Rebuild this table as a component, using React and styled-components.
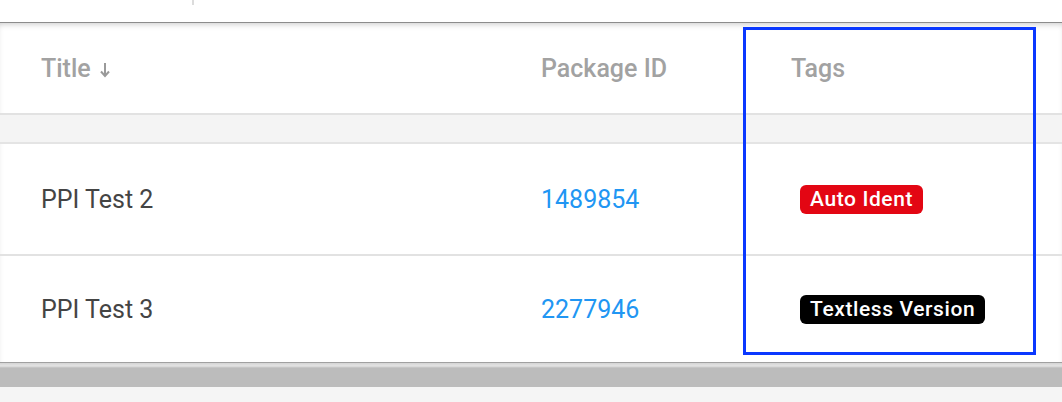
import React from "react";
import styled, { createGlobalStyle } from "styled-components";

const GlobalStyle = createGlobalStyle`
  html, body {
    margin: 0;
    padding: 0;
    background: #f5f5f5;
    font-family: Roboto, "Noto Sans", "Liberation Sans", sans-serif;
  }
`;

const Page = styled.div`
  position: relative;
  width: 1062px;
  height: 402px;
  overflow: hidden;
  display: flex;
  flex-direction: column;
  background: #f5f5f5;
`;

const TopBar = styled.div`
  height: 22px;
  background: #ffffff;
  display: flex;
  padding-left: 192px;
  border-bottom: 1px solid #8c8c8c;
`;

const TopDivider = styled.div`
  width: 2px;
  height: 5px;
  background: #dcdcdc;
`;

const Table = styled.div`
  display: flex;
  flex-direction: column;
  background: #ffffff;
  box-shadow: inset 0 4px 6px -3px rgba(0, 0, 0, 0.22);
`;

const Row = styled.div`
  display: grid;
  grid-template-columns: 500px 250px 1fr;
  align-items: center;
  height: ${({ $h }) => $h}px;
  border-bottom: ${({ $last }) => ($last ? "none" : "2px solid #e2e2e2")};
`;

const HeadCell = styled.div`
  padding-left: 41px;
  font-size: 25px;
  font-weight: 500;
  color: #a2a2a2;
  display: flex;
  align-items: center;
  gap: 8px;
`;

const SortArrow = styled.svg`
  width: 12px;
  height: 16px;
  margin-top: 3px;
`;

const Band = styled.div`
  height: 27px;
  background: #f4f4f4;
  border-bottom: 2px solid #e4e4e4;
`;

const Cell = styled.div`
  padding-left: 41px;
  font-size: 25px;
  color: ${({ $link }) => ($link ? "#2196f3" : "#444444")};
  display: flex;
  align-items: center;
`;

const Tag = styled.span`
  margin-left: 9px;
  display: inline-flex;
  align-items: center;
  height: 29px;
  padding: 0 10px;
  border-radius: 6px;
  background: ${({ $bg }) => $bg};
  color: #ffffff;
  font-size: 21px;
  font-weight: 500;
  letter-spacing: 0.6px;
`;

const Footer = styled.div`
  height: 24px;
  border-top: 1px solid #a0a0a0;
  background: linear-gradient(#d4d4d4 0, #e4e4e4 3px, #bcbcbc 5px, #bcbcbc 100%);
`;

const Highlight = styled.div`
  position: absolute;
  left: 743px;
  top: 27px;
  width: 293px;
  height: 328px;
  box-sizing: border-box;
  border: 3px solid #0a38ff;
  pointer-events: none;
`;

const rows = [
  { title: "PPI Test 2", id: "1489854", tag: "Auto Ident", color: "#e30613", h: 110 },
  { title: "PPI Test 3", id: "2277946", tag: "Textless Version", color: "#000000", h: 106 },
];

export default function App() {
  return (
    <Page>
      <GlobalStyle />
      <TopBar>
        <TopDivider />
      </TopBar>
      <Table>
        <Row $h={90}>
          <HeadCell>
            Title
            <SortArrow viewBox="0 0 12 16">
              <path d="M6 1v13M2 9.5l4 4.5 4-4.5" stroke="#9a9a9a" strokeWidth="2" fill="none" />
            </SortArrow>
          </HeadCell>
          <HeadCell>Package ID</HeadCell>
          <HeadCell>Tags</HeadCell>
        </Row>
        <Band />
        {rows.map((r, i) => (
          <Row key={r.id} $h={r.h} $last={i === rows.length - 1}>
            <Cell>{r.title}</Cell>
            <Cell $link>{r.id}</Cell>
            <Cell>
              <Tag $bg={r.color}>{r.tag}</Tag>
            </Cell>
          </Row>
        ))}
      </Table>
      <Footer />
      <Highlight />
    </Page>
  );
}
